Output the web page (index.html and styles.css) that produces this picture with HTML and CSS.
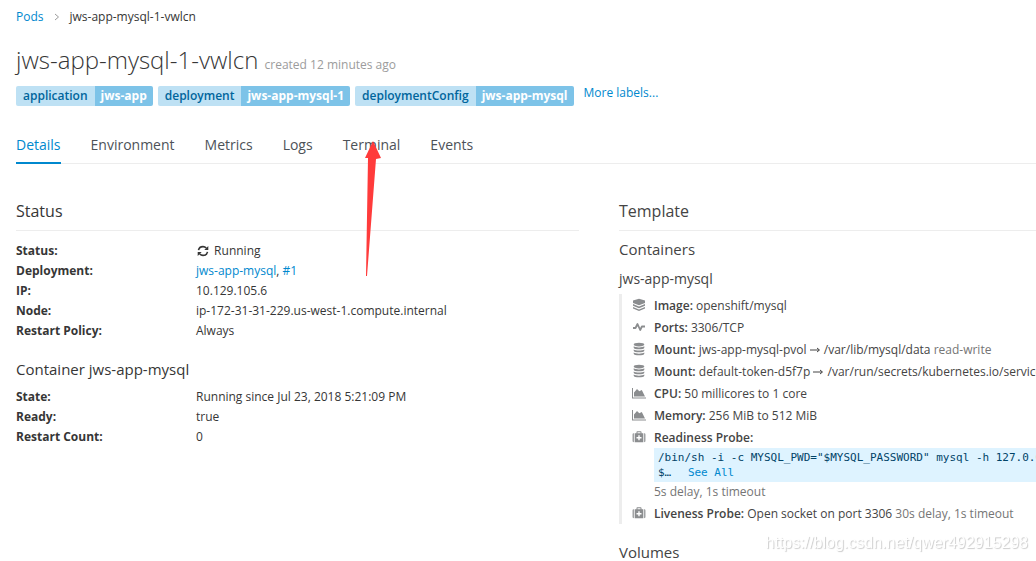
FILE: index.html
```html
<!DOCTYPE html>
<html lang="en">

<head>
  <meta charset="UTF-8">
  <title>jws-app-mysql-1-vwlcn</title>
  <link rel="stylesheet" href="styles.css">
</head>

<body>
  <!-- shared icons -->
  <svg class="sprite" aria-hidden="true">
    <symbol id="icon-layers" viewBox="0 0 14 14">
      <path d="M7 .8l6 1.700v2.500L7 7.200 1 5V2.500z" />
      <path d="M1 6l6 2.400L13 6v1.800L7 10.200 1 7.800z" />
      <path d="M1 9l6 2.400L13 9v1.400L7 13l-6-2.600z" />
    </symbol>
    <symbol id="icon-pulse" viewBox="0 0 14 14">
      <path d="M1 8h2.500L5.500 4l2.700 6 1.700-3.500H13" fill="none" stroke="currentColor" stroke-width="1.800" stroke-linejoin="round" />
    </symbol>
    <symbol id="icon-database" viewBox="0 0 14 14">
      <ellipse cx="7" cy="2.600" rx="5.300" ry="1.800" />
      <path d="M1.700 4.300c2 1.500 8.600 1.500 10.600 0v1.400c0 2-10.600 2-10.600 0zM1.700 7.400c2 1.500 8.600 1.500 10.600 0v1.400c0 2-10.600 2-10.600 0zM1.700 10.500c2 1.500 8.600 1.500 10.600 0v1.200c0 2-10.600 2-10.600 0z" />
    </symbol>
    <symbol id="icon-chart" viewBox="0 0 14 14">
      <path d="M0 2h1v9.500h13v1H0z" />
      <path d="M2 10.500V6.500l3-3.500 2.300 2.300L9.800 4l3.200 6.500z" />
    </symbol>
    <symbol id="icon-medkit" viewBox="0 0 14 14">
      <path d="M.6 4.500c0-.8.4-1.300 1.200-1.300v9C1 12.200.6 11.700.6 11zM12.200 3.200c.8 0 1.200.5 1.200 1.300V11c0 .7-.4 1.200-1.200 1.200z" />
      <path fill-rule="evenodd" d="M4.500 3.200V2c0-.5.3-.8.8-.8h3.400c.5 0 .8.3.8.8v1.200h1.800v9H2.700v-9zm1-1v1h3v-1zM6.300 5.200V7H4.500v1.400h1.800v1.800h1.400V8.400h1.800V7H7.700V5.200z" />
    </symbol>
  </svg>

  <main class="page">
    <nav class="breadcrumb" aria-label="Breadcrumb">
      <a href="#">Pods</a>
      <svg class="chevron" viewBox="0 0 6 8" aria-hidden="true"><path d="M1 1l3.500 3L1 7" /></svg>
      <span>jws-app-mysql-1-vwlcn</span>
    </nav>

    <h1>jws-app-mysql-1-vwlcn <small>created 12 minutes ago</small></h1>

    <div class="labels">
      <a class="label" href="#"><span class="label-key">application</span><span class="label-value">jws-app</span></a>
      <a class="label" href="#"><span class="label-key">deployment</span><span class="label-value">jws-app-mysql-1</span></a>
      <a class="label" href="#"><span class="label-key">deploymentConfig</span><span class="label-value">jws-app-mysql</span></a>
      <a class="more-labels" href="#">More labels...</a>
    </div>

    <nav class="tabs">
      <a class="active" href="#">Details</a>
      <a href="#">Environment</a>
      <a href="#">Metrics</a>
      <a href="#">Logs</a>
      <a class="pointed" href="#">Terminal
        <svg class="arrow" viewBox="0 0 18 136" aria-hidden="true"><path d="M9 0l8 17-5 1L3 135H2L4 17H1z" /></svg>
      </a>
      <a href="#">Events</a>
    </nav>

    <div class="columns">
      <section>
        <h2>Status</h2>
        <dl>
          <dt>Status:</dt>
          <dd>
            <svg class="refresh" viewBox="0 0 12 12" aria-hidden="true">
              <path d="M1.500 5.200C1.900 3 3.600 1.600 6 1.600c1.300 0 2.400.5 3.300 1.400M10.500 6.800C10.100 9 8.400 10.400 6 10.400c-1.300 0-2.400-.5-3.300-1.400" fill="none" stroke="currentColor" stroke-width="1.600" />
              <path d="M11.300 1v4h-4zM.7 11V7h4z" />
            </svg>
            Running
          </dd>
          <dt>Deployment:</dt>
          <dd><a href="#">jws-app-mysql</a>, <a href="#">#1</a></dd>
          <dt>IP:</dt>
          <dd>10.129.105.6</dd>
          <dt>Node:</dt>
          <dd>ip-172-31-31-229.us-west-1.compute.internal</dd>
          <dt>Restart Policy:</dt>
          <dd>Always</dd>
        </dl>
        <h3>Container jws-app-mysql</h3>
        <dl>
          <dt>State:</dt>
          <dd>Running since Jul 23, 2018 5:21:09 PM</dd>
          <dt>Ready:</dt>
          <dd>true</dd>
          <dt>Restart Count:</dt>
          <dd>0</dd>
        </dl>
      </section>

      <section class="template">
        <h2>Template</h2>
        <h3>Containers</h3>
        <h4>jws-app-mysql</h4>
        <ul class="container-info">
          <li>
            <svg class="icon"><use href="#icon-layers" /></svg>
            <div><b>Image:</b> openshift/mysql</div>
          </li>
          <li>
            <svg class="icon"><use href="#icon-pulse" /></svg>
            <div><b>Ports:</b> 3306/TCP</div>
          </li>
          <li>
            <svg class="icon"><use href="#icon-database" /></svg>
            <div><b>Mount:</b> jws-app-mysql-pvol <svg class="to" viewBox="0 0 11 8"><path d="M0 4h9M7 2l2.500 2L7 6" /></svg> /var/lib/mysql/data <span class="muted">read-write</span></div>
          </li>
          <li>
            <svg class="icon"><use href="#icon-database" /></svg>
            <div><b>Mount:</b> default-token-d5f7p <svg class="to" viewBox="0 0 11 8"><path d="M0 4h9M7 2l2.500 2L7 6" /></svg> /var/run/secrets/kubernetes.io/serviceaccount</div>
          </li>
          <li>
            <svg class="icon"><use href="#icon-chart" /></svg>
            <div><b>CPU:</b> 50 millicores to 1 core</div>
          </li>
          <li>
            <svg class="icon"><use href="#icon-chart" /></svg>
            <div><b>Memory:</b> 256 MiB to 512 MiB</div>
          </li>
          <li>
            <svg class="icon"><use href="#icon-medkit" /></svg>
            <div>
              <b>Readiness Probe:</b>
              <code>/bin/sh -i -c MYSQL_PWD="$MYSQL_PASSWORD" mysql -h 127.0.0.1<br>$… <a href="#">See All</a></code>
              <div class="muted">5s delay, 1s timeout</div>
            </div>
          </li>
          <li>
            <svg class="icon"><use href="#icon-medkit" /></svg>
            <div><b>Liveness Probe:</b> Open socket on port 3306 <span class="muted">30s delay, 1s timeout</span></div>
          </li>
        </ul>
        <h3>Volumes</h3>
      </section>
    </div>
  </main>

  <div class="watermark">https://blog.csdn.net/qwer492915298</div>
</body>
</html>
```

FILE: styles.css
```css
* {
  box-sizing: border-box;
}

body {
  margin: 0;
  overflow: hidden;
  font-family: "Open Sans", sans-serif;
  font-size: 12px;
  line-height: 20px;
  background: #fff;
  color: #363636;
}

a {
  color: #0088ce;
  text-decoration: none;
}

a:hover {
  text-decoration: underline;
}

.sprite {
  display: none;
}

/* wide page, the template column runs past a narrow window */
.page {
  min-width: 1182px;
  padding: 7px 0 0 16px;
}

.breadcrumb {
  display: flex;
  align-items: center;
}

.chevron {
  width: 6px;
  height: 8px;
  margin: 0 10px;
  fill: none;
  stroke: #9c9c9c;
}

h1 {
  margin: 19px 0 7px;
  font-size: 24px;
  font-weight: 300;
  line-height: 28px;
}

h1 small {
  font-size: 12px;
  font-weight: 400;
  color: #9c9c9c;
}

.labels {
  display: flex;
  gap: 5px;
}

.label {
  display: flex;
  border-radius: 2px;
  overflow: hidden;
  font-weight: 600;
}

.label-key {
  padding: 0 7px;
  background: #bee1f4;
  color: #00659c;
}

.label-value {
  padding: 0 6px;
  background: #7dc3e8;
  color: #fff;
  font-weight: 700;
}

.more-labels {
  margin: -3px 0 0 5px;
}

.tabs {
  display: flex;
  gap: 30px;
  margin-top: 21px;
  border-bottom: 1px solid #ededed;
  font-size: 14px;
}

.tabs a {
  padding: 8px 0 7px;
  margin-bottom: -1px;
  border-bottom: 2px solid transparent;
  color: #4d5258;
}

.tabs .active {
  border-color: #0088ce;
  color: #0088ce;
}

.pointed {
  position: relative;
}

.arrow {
  position: absolute;
  top: 14px;
  left: 21px;
  width: 18px;
  height: 136px;
  fill: #ff3b3b;
}

.columns {
  display: grid;
  grid-template-columns: 1fr 1fr;
  gap: 40px;
  margin-top: 37px;
}

h2,
h3,
h4 {
  margin: 0;
  font-weight: 400;
}

h2 {
  padding-bottom: 9px;
  border-bottom: 1px solid #ededed;
  font-size: 16px;
}

h3 {
  font-size: 15px;
}

h4 {
  font-size: 14px;
}

dl {
  display: grid;
  grid-template-columns: 180px 1fr;
  margin: 10px 0 18px;
}

dl + h3 {
  margin-bottom: -2px;
}

dt {
  font-weight: 700;
}

dd {
  margin: 0;
}

.refresh {
  width: 12px;
  height: 12px;
  margin: 0 2px 0 1px;
  vertical-align: -2px;
  fill: currentColor;
}

.template {
  color: #444;
}

.template h3 {
  margin: 8px 0 10px;
}

.container-info {
  display: flex;
  flex-direction: column;
  gap: 2px;
  margin: 5px 0 18px;
  padding: 2px 0 0 10px;
  border-left: 3px solid #ededed;
  list-style: none;
}

.container-info li {
  display: flex;
  gap: 8px;
  white-space: nowrap;
}

.container-info li > div {
  flex: 1;
  min-width: 0;
}

.container-info b {
  font-weight: 600;
}

.icon {
  width: 14px;
  height: 14px;
  margin-top: 2px;
  fill: currentColor;
  color: #8b8d8f;
}

.to {
  width: 11px;
  height: 8px;
  fill: none;
  stroke: currentColor;
}

.muted {
  color: #757575;
}

code {
  display: block;
  padding: 2px 4px;
  background: #def3ff;
  color: #004368;
  font-family: "DejaVu Sans Mono", monospace;
  font-size: 11px;
  line-height: 15px;
}

code a {
  margin-left: 10px;
}

.watermark {
  position: fixed;
  right: 8px;
  bottom: 8px;
  font-family: "Liberation Sans", sans-serif;
  font-size: 16px;
  color: #fff;
  text-shadow: 1px 1px 1px #ccc;
}
```
